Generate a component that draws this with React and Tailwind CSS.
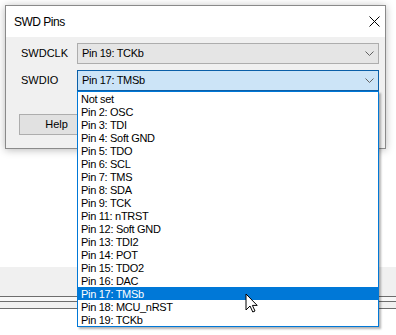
import React from "react";

const items = [
  "Not set",
  "Pin 2: OSC",
  "Pin 3: TDI",
  "Pin 4: Soft GND",
  "Pin 5: TDO",
  "Pin 6: SCL",
  "Pin 7: TMS",
  "Pin 8: SDA",
  "Pin 9: TCK",
  "Pin 11: nTRST",
  "Pin 12: Soft GND",
  "Pin 13: TDI2",
  "Pin 14: POT",
  "Pin 15: TDO2",
  "Pin 16: DAC",
  "Pin 17: TMSb",
  "Pin 18: MCU_nRST",
  "Pin 19: TCKb",
];

function Chevron() {
  return (
    <svg width="9" height="5" viewBox="0 0 9 5" className="block">
      <polyline points="0.5,0.5 4.5,4.5 8.5,0.5" fill="none" stroke="#606060" strokeWidth="1" />
    </svg>
  );
}

export default function App() {
  return (
    <div className="relative w-[396px] h-[335px] bg-white overflow-hidden font-['Liberation_Sans',Arial,sans-serif] text-[11px] text-black leading-none">
      {/* Dialog */}
      <div className="ml-[5px] mt-[5px] w-[381px] h-[144px] border border-[#8a8a8a] bg-[#f0f0f0] shadow-[0_1px_8px_rgba(0,0,0,0.28)] flex flex-col">
        <div className="h-[31px] bg-white flex items-center pl-[8px] pr-[5px]">
          <span className="text-[12px] tracking-[-0.5px]">SWD Pins</span>
          <svg width="11" height="11" viewBox="0 0 11 11" className="ml-auto mr-[0px] block">
            <line x1="0.5" y1="0.5" x2="10.5" y2="10.5" stroke="#000" strokeWidth="1" />
            <line x1="10.5" y1="0.5" x2="0.5" y2="10.5" stroke="#000" strokeWidth="1" />
          </svg>
        </div>
        <div className="flex-1 flex flex-col pt-[6px]">
          <div className="flex items-center h-[21px] pl-[15px]">
            <span className="w-[56px]">SWDCLK</span>
            <div className="w-[302px] h-[21px] border border-[#adadad] bg-[#e5e5e5] flex items-center pl-[4px] pr-[4px]">
              <span className="tracking-[-0.3px]">Pin 19: TCKb</span>
              <span className="ml-auto"><Chevron /></span>
            </div>
          </div>
          <div className="flex items-center h-[21px] pl-[15px] mt-[6px]">
            <span className="w-[56px]">SWDIO</span>
            <div className="w-[302px] h-[21px] border border-[#0a5fa8] bg-[#cce4f7] flex items-center pl-[4px] pr-[4px]">
              <span className="tracking-[-0.3px]">Pin 17: TMSb</span>
              <span className="ml-auto"><Chevron /></span>
            </div>
          </div>
          <div className="flex pl-[13px] mt-[23px]">
            <div className="w-[75px] h-[21px] border border-[#adadad] bg-[#e1e1e1] flex items-center justify-center">
              Help
            </div>
          </div>
        </div>
      </div>

      {/* Background strip below */}
      <div className="mt-[118px] h-[29px] bg-[#f0f0f0]" />
      <div className="h-px bg-[#6d6d6d]" />
      <div className="h-[4px] bg-[#f7f7f7]" />
      <div className="h-px bg-[#6d6d6d]" />
      <div className="h-[6px] bg-[#f0f0f0]" />
      <div className="h-px bg-[#6d6d6d]" />

      {/* Dropdown list */}
      <div className="absolute left-[77px] top-[91px] w-[302px] h-[236px] border border-[#0078d7] bg-white shadow-[2px_2px_2px_rgba(0,0,0,0.3)] flex flex-col">
        {items.map((t) => (
          <div
            key={t}
            className={
              t === "Pin 17: TMSb"
                ? "h-[13px] leading-[13px] pl-[3px] pt-px tracking-[-0.3px] bg-[#0078d7] text-white"
                : "h-[13px] leading-[13px] pl-[3px] pt-px tracking-[-0.3px]"
            }
          >
            <span className="block leading-[12px]">{t}</span>
          </div>
        ))}
      </div>

      {/* Mouse cursor */}
      <svg
        width="13"
        height="20"
        viewBox="0 0 13 20"
        className="absolute left-[245px] top-[293px]"
      >
        <path
          d="M1 1 L1 17 L5 13 L7.8 19 L10 18 L7.4 12.4 L12.2 12.4 Z"
          fill="#fff"
          stroke="#000"
          strokeWidth="1"
          strokeLinejoin="miter"
        />
      </svg>
    </div>
  );
}
